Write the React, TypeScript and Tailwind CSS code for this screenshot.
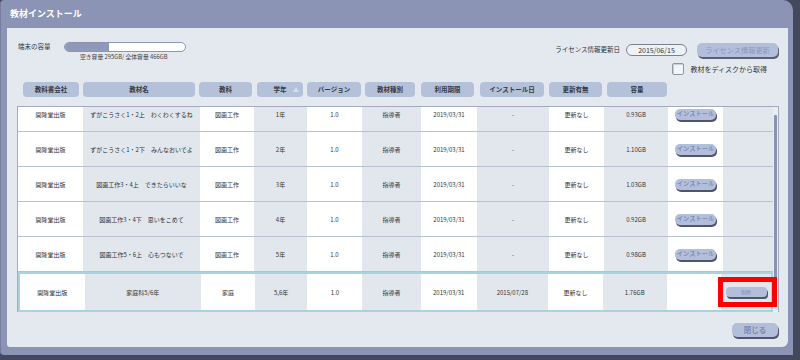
import React from "react";

const colW = [
  "w-[65px]",
  "w-[117px]",
  "w-[54px]",
  "w-[53px]",
  "w-[55px]",
  "w-[59px]",
  "w-[56px]",
  "w-[72px]",
  "w-[55px]",
  "w-[64px]",
  "w-[55px]",
  "w-[50px]",
];

type Row = {
  name: string;
  subj: string;
  grade: string;
  inst: string;
  size: string;
  installed?: boolean;
};

const rows: Row[] = [
  { name: "ずがこうさく1・2上　わくわくするね", subj: "図画工作", grade: "1年", inst: "-", size: "0.93GB" },
  { name: "ずがこうさく1・2下　みんなおいでよ", subj: "図画工作", grade: "2年", inst: "-", size: "1.10GB" },
  { name: "図画工作3・4上　できたらいいな", subj: "図画工作", grade: "3年", inst: "-", size: "1.03GB" },
  { name: "図画工作3・4下　思いをこめて", subj: "図画工作", grade: "4年", inst: "-", size: "0.92GB" },
  { name: "図画工作5・6上　心もつないで", subj: "図画工作", grade: "5年", inst: "-", size: "0.98GB" },
  { name: "家庭科5/6年", subj: "家庭", grade: "5,6年", inst: "2015/07/28", size: "1.76GB", installed: true },
];

const font = "font-['Noto_Sans_CJK_JP','Noto_Sans',sans-serif]";

function Header({ w, ml, children }: { w: string; ml: string; children: React.ReactNode }) {
  return (
    <div
      className={`${w} ${ml} h-[15px] shrink-0 rounded-[4px] bg-[#b5c1d8] flex items-center justify-center text-[6.5px] font-bold text-[#333a48] relative`}
    >
      {children}
    </div>
  );
}

export default function App() {
  return (
    <div className={`w-[800px] h-[360px] bg-[#44485c] overflow-hidden ${font}`}>
      <div className="w-[793px] h-[355px] bg-[#8b94b4] rounded-tr-[10px] rounded-tl-[4px] rounded-bl-[4px] flex flex-col border-l border-[#767e9f]">
        {/* title bar */}
        <div className="h-[28px] flex items-center pl-[9px] shrink-0">
          <span className="text-white text-[9px] font-bold">教材インストール</span>
        </div>

        {/* panel */}
        <div className="ml-[6px] w-[781px] h-[319px] bg-[#e4e8ef] rounded-br-[6px] rounded-bl-[3px] flex flex-col">
          {/* top section */}
          <div className="h-[54px] flex justify-between pt-[14px] shrink-0">
            <div className="pl-[11px] flex flex-col">
              <div className="flex items-center h-[10px]">
                <span className="w-[46px] text-[6.5px] text-[#333]">端末の容量</span>
                <div className="w-[122px] h-[10px] rounded-full border border-[#8d96b0] bg-white overflow-hidden flex">
                  <div className="w-[44px] h-full bg-[#8f9abb]" />
                </div>
              </div>
              <div className="ml-[62px] mt-[1px] text-[5.8px] text-[#444]">空き容量 295GB/ 全体容量 466GB</div>
            </div>

            <div className="pr-[10px] flex flex-col items-end">
              <div className="flex items-center mt-[1px]">
                <span className="text-[6.5px] text-[#333]">ライセンス情報更新日</span>
                <div className="ml-[6px] w-[61px] h-[12px] rounded-full border border-[#7c8192] bg-[#eef1f5] flex items-center justify-center text-[7px] text-[#333]">
                  2015/06/15
                </div>
                <div className="ml-[10px] w-[81px] h-[14px] rounded-[5px] bg-[#b3bedb] shadow-[1px_2px_0_#5a5f74] flex items-center justify-center text-[7.2px] text-[#8a97bf]">
                  ライセンス情報更新
                </div>
              </div>
              <div className="flex items-center mt-[6px] mr-[11px]">
                <div className="w-[12px] h-[12px] bg-[#f4f5f8] border border-[#8f95a3] rounded-[2px] shadow-[inset_1px_1px_1px_#c8ccd4]" />
                <span className="ml-[6px] text-[7px] text-[#333]">教材をディスクから取得</span>
              </div>
            </div>
          </div>

          {/* header row */}
          <div className="flex pl-[16px] shrink-0">
            <Header w="w-[56px]" ml="ml-0">教科書会社</Header>
            <Header w="w-[112px]" ml="ml-[4px]">教材名</Header>
            <Header w="w-[53px]" ml="ml-[4px]">教科</Header>
            <Header w="w-[46px]" ml="ml-[5px]">
              学年
              <svg className="absolute right-[4px] top-[5px]" width="6" height="5" viewBox="0 0 6 5">
                <polygon points="3,0 6,5 0,5" fill="#d6dcea" />
              </svg>
            </Header>
            <Header w="w-[54px]" ml="ml-[4px]">バージョン</Header>
            <Header w="w-[50px]" ml="ml-[4px]">教材種別</Header>
            <Header w="w-[53px]" ml="ml-[6px]">利用期限</Header>
            <Header w="w-[64px]" ml="ml-[6px]">インストール日</Header>
            <Header w="w-[53px]" ml="ml-[5px]">更新有無</Header>
            <Header w="w-[60px]" ml="ml-[5px]">容量</Header>
          </div>

          {/* table */}
          <div className="ml-[10px] mt-[9px] w-[762px] h-[206px] border-t border-l border-r border-[#a3abbc] relative flex shrink-0">
            <div className="w-[755px] h-[205px] overflow-hidden">
              <div className="-mt-[10px]">
                {rows.map((r, ri) => {
                  const cells: React.ReactNode[] = [
                    "開隆堂出版",
                    r.name,
                    r.subj,
                    r.grade,
                    "1.0",
                    "指導者",
                    "2019/03/31",
                    r.inst,
                    "更新なし",
                    r.size,
                    r.installed ? null : (
                      <div className="w-[41px] h-[11px] rounded-[5px] bg-[#b3bedb] shadow-[1px_2px_0_#50556a] flex items-center justify-center text-[6.3px] text-[#66739f]">
                        インストール
                      </div>
                    ),
                    r.installed ? (
                      <div className="w-[41px] h-[10px] rounded-[4px] bg-[#b3bedb] shadow-[1px_2px_0_#50556a] flex items-center justify-center text-[5px] text-[#7f8bb2]">
                        削除
                      </div>
                    ) : null,
                  ];
                  return (
                    <div
                      key={ri}
                      className={`flex ${
                        r.installed ? "h-[40px] border-2 border-[#a9d3dd]" : "h-[35px] border-b border-[#b9c1d0]"
                      }`}
                    >
                      {cells.map((c, ci) => (
                        <div
                          key={ci}
                          className={`${colW[ci]} ${
                            ci % 2 ? "bg-[#e2e7ee]" : "bg-white"
                          } flex items-center justify-center text-[6px] text-[#333] whitespace-nowrap`}
                        >
                          {c}
                        </div>
                      ))}
                    </div>
                  );
                })}
              </div>
            </div>
            {/* scrollbar */}
            <div className="w-[5px] h-[205px] bg-[#e9edf3]">
              <div className="mt-[8px] ml-[1px] w-[3px] h-[187px] bg-[#8a92b1] rounded-[1px]" />
            </div>
            {/* annotation box */}
            <div className="absolute left-[700px] top-[170px] w-[59px] h-[30px] border-[5px] border-[#ff0000] pointer-events-none" />
          </div>

          {/* bottom button */}
          <div className="flex justify-end pr-[10px] mt-[11px]">
            <div className="w-[46px] h-[14px] rounded-[5px] bg-[#b3bedb] shadow-[1px_2px_0_#50556a] flex items-center justify-center text-[7.5px] font-bold text-[#7e8ab0]">
              閉じる
            </div>
          </div>
        </div>
      </div>
    </div>
  );
}
